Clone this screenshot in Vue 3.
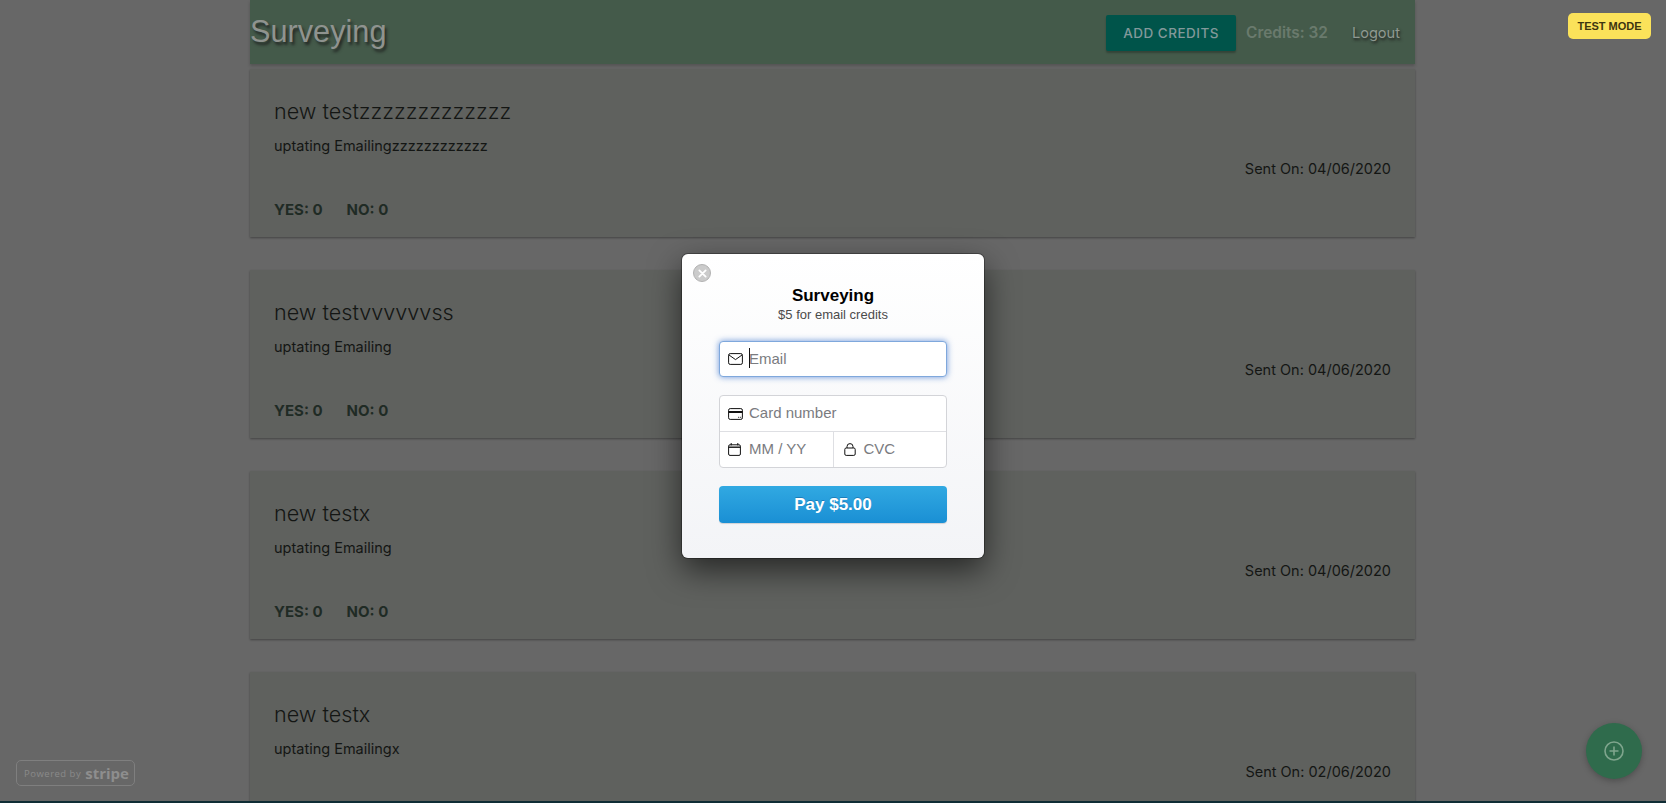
<template>
  <div class="page">
    <div class="container">
      <nav class="nav">
        <a class="brand">Surveying</a>
        <div class="nav-right">
          <button class="add-btn">ADD CREDITS</button>
          <span class="credits">Credits: 32</span>
          <a class="logout">Logout</a>
        </div>
      </nav>
      <div v-for="(s, i) in surveys" :key="i" class="card">
        <div class="card-content">
          <span class="card-title">{{ s.title }}</span>
          <p class="body">{{ s.body }}</p>
          <p class="sent">Sent On: {{ s.sent }}</p>
        </div>
        <div v-if="i < 3" class="card-action">
          <a>YES: 0</a>
          <a>NO: 0</a>
        </div>
      </div>
    </div>

    <a class="fab">
      <svg width="20" height="20" viewBox="0 0 20 20" fill="none" stroke="#7fa58d" stroke-width="1.6">
        <circle cx="10" cy="10" r="9" />
        <path d="M10 5.5v9M5.5 10h9" />
      </svg>
    </a>

    <div class="powered">
      <span class="by">Powered by</span>
      <span class="stripe">stripe</span>
    </div>

    <div class="test-mode">TEST MODE</div>
    <div class="bottom-edge"></div>

    <div class="overlay">
      <div class="modal">
        <button class="close" aria-label="Close">
          <svg width="9" height="9" viewBox="0 0 10 10" stroke="#fff" stroke-width="2" stroke-linecap="round">
            <path d="M1.5 1.5l7 7M8.5 1.5l-7 7" />
          </svg>
        </button>
        <h1 class="m-title">Surveying</h1>
        <div class="m-sub">$5 for email credits</div>

        <div class="field email">
          <svg class="ico" width="15" height="12" viewBox="0 0 15 12" fill="none" stroke="#111" stroke-width="1">
            <rect x="0.6" y="0.6" width="13.8" height="10.8" rx="1.6" />
            <path d="M1 2l6.5 4.6L14 2" />
          </svg>
          <span class="caret"></span>
          <span class="ph">Email</span>
        </div>

        <div class="group">
          <div class="field row">
            <svg class="ico" width="15" height="12" viewBox="0 0 15 12" fill="none" stroke="#111" stroke-width="1">
              <rect x="0.6" y="0.6" width="13.8" height="10.8" rx="1.6" />
              <path d="M0.6 4h13.8" stroke-width="2" />
              <path d="M10.2 9.3h1M12.2 9.3h1" />
            </svg>
            <span class="ph">Card number</span>
          </div>
          <div class="split">
            <div class="field cell">
              <svg class="ico" width="13" height="13" viewBox="0 0 13 13" fill="none" stroke="#111" stroke-width="1">
                <rect x="0.6" y="1.8" width="11.8" height="10.6" rx="1.4" />
                <path d="M0.6 4.2h11.8" stroke-width="1.4" />
                <path d="M3.2 0v2.4M9.8 0v2.4" />
              </svg>
              <span class="ph">MM / YY</span>
            </div>
            <div class="field cell cvc">
              <svg class="ico" width="12" height="13" viewBox="0 0 12 13" fill="none" stroke="#111" stroke-width="1">
                <rect x="0.8" y="5" width="10.4" height="7.4" rx="1.4" />
                <path d="M3 5V3.6a3 3 0 0 1 6 0V5" />
              </svg>
              <span class="ph">CVC</span>
            </div>
          </div>
        </div>

        <button class="pay">Pay $5.00</button>
      </div>
    </div>
  </div>
</template>

<script setup>
const surveys = [
  { title: 'new testzzzzzzzzzzzzz', body: 'uptating Emailingzzzzzzzzzzzz', sent: '04/06/2020' },
  { title: 'new testvvvvvvss', body: 'uptating Emailing', sent: '04/06/2020' },
  { title: 'new testx', body: 'uptating Emailing', sent: '04/06/2020' },
  { title: 'new testx', body: 'uptating Emailingx', sent: '02/06/2020' }
];
</script>

<style>
html, body {
  margin: 0;
  height: 100%;
  overflow: hidden;
  background: #676767;
}
</style>

<style scoped>
.page {
  height: 803px;
  overflow: hidden;
  position: relative;
  font-family: Inter, "Liberation Sans", sans-serif;
  background: #676767;
}
.container {
  width: 1165px;
  margin-left: 250px;
}
.nav {
  height: 64px;
  background: #445a4a;
  display: flex;
  align-items: center;
  justify-content: space-between;
  box-shadow: 0 2px 3px rgba(0, 0, 0, 0.2);
}
.brand {
  font-family: "Liberation Sans", sans-serif;
  font-size: 30.7px;
  color: #8f938f;
  text-shadow: 2px 3px 3px #232724;
}
.nav-right {
  display: flex;
  align-items: center;
  margin-top: 1px;
  padding-right: 15px;
}
.add-btn {
  width: 130px;
  height: 36px;
  border: 0;
  border-radius: 2px;
  background: #00544a;
  color: #82999a;
  font-family: Inter, sans-serif;
  font-size: 13.5px;
  font-weight: 500;
  letter-spacing: 0.5px;
  box-shadow: 0 2px 2px rgba(0, 0, 0, 0.25);
}
.credits {
  margin-left: 10px;
  font-size: 15.4px;
  font-weight: 600;
  color: #6a7a6d;
}
.logout {
  margin-left: 24px;
  font-size: 14.6px;
  color: #8f9991;
  text-shadow: 1px 2px 3px #1d1d1d;
}
.card {
  height: 168px;
  margin: 5px 0 33px;
  background: #5f615e;
  box-shadow: 0 1px 2px rgba(0, 0, 0, 0.35);
  box-sizing: border-box;
  display: flex;
  flex-direction: column;
  color: #141614;
}
.card-content {
  padding: 26px 24px 0;
  flex: 1;
}
.card-title {
  display: block;
  font-size: 21.6px;
  font-weight: 300;
  line-height: 32px;
}
.body {
  margin: 8px 0 0;
  font-size: 14.5px;
  line-height: 22px;
}
.sent {
  margin: 1px 0 0;
  font-size: 14.5px;
  line-height: 22px;
  text-align: right;
}
.card-action {
  padding: 0 24px 18px;
  display: flex;
  gap: 24px;
  font-size: 15px;
  font-weight: 700;
  color: #1f2b25;
}
.fab {
  position: absolute;
  left: 1586px;
  top: 723px;
  width: 56px;
  height: 56px;
  border-radius: 50%;
  background: #2f6b4c;
  display: flex;
  align-items: center;
  justify-content: center;
  box-shadow: 0 2px 6px rgba(0, 0, 0, 0.25);
}
.powered {
  position: absolute;
  left: 16px;
  top: 760px;
  width: 119px;
  height: 26px;
  box-sizing: border-box;
  border: 1px solid #7f7f7f;
  border-radius: 5px;
  display: flex;
  align-items: center;
  padding-left: 7px;
  gap: 4px;
  color: #8a8a8a;
  font-family: "Open Sans", sans-serif;
}
.by {
  font-size: 9.5px;
  letter-spacing: 0.5px;
}
.stripe {
  font-size: 15px;
  font-weight: 700;
  line-height: 16px;
  color: #8e8e8e;
}
.test-mode {
  position: absolute;
  left: 1568px;
  top: 13px;
  width: 83px;
  height: 26px;
  border-radius: 5px;
  background: #fbe25a;
  color: #3d3510;
  font-family: "Liberation Sans", sans-serif;
  font-size: 11px;
  font-weight: 700;
  display: flex;
  align-items: center;
  justify-content: center;
}
.bottom-edge {
  position: absolute;
  left: 0;
  right: 0;
  bottom: 0;
  height: 2px;
  background: #0f2d35;
}
.overlay {
  position: absolute;
  inset: 0;
  display: flex;
  align-items: center;
  justify-content: center;
  padding-top: 9px;
  box-sizing: border-box;
}
.modal {
  position: relative;
  width: 302px;
  height: 304px;
  box-sizing: border-box;
  padding: 32px 37px 0;
  border-radius: 6px;
  background: linear-gradient(#ffffff, #f3f4f7);
  box-shadow: 0 0 0 1px rgba(0, 0, 0, 0.3), 0 12px 32px rgba(0, 0, 0, 0.6);
  display: flex;
  flex-direction: column;
  font-family: "Liberation Sans", sans-serif;
}
.close {
  position: absolute;
  left: 11px;
  top: 10px;
  width: 18px;
  height: 18px;
  padding: 0;
  border: 1px solid #b2b2b2;
  border-radius: 50%;
  background: #cbcbcb;
  display: flex;
  align-items: center;
  justify-content: center;
}
.m-title {
  margin: 0;
  font-size: 17px;
  font-weight: 700;
  line-height: 20px;
  text-align: center;
  color: #000;
}
.m-sub {
  margin-top: 1px;
  font-size: 13px;
  line-height: 16px;
  text-align: center;
  color: #4b4b4b;
}
.field {
  display: flex;
  align-items: center;
  height: 36px;
  box-sizing: border-box;
  position: relative;
}
.email {
  margin-top: 18px;
  background: #fff;
  border: 1px solid #7fa8dc;
  border-radius: 4px;
  box-shadow: 0 0 6px rgba(80, 130, 210, 0.85);
}
.ico {
  position: absolute;
  left: 8px;
}
.ph {
  margin-left: 29px;
  margin-top: -2px;
  font-size: 15px;
  color: #7a7b80;
}
.caret {
  position: absolute;
  left: 29px;
  top: 6px;
  width: 1px;
  height: 20px;
  background: #111;
}
.group {
  margin-top: 18px;
  background: #fff;
  border: 1px solid #d3d4d8;
  border-radius: 4px;
}
.row {
  height: 36px;
  border-bottom: 1px solid #dedfe3;
}
.split {
  display: flex;
}
.cell {
  flex: 1;
  height: 35px;
}
.cvc {
  border-left: 1px solid #dedfe3;
}
.cvc .ico {
  left: 10px;
}
.cvc .ph {
  margin-left: 30px;
}
.pay {
  margin-top: 18px;
  height: 37px;
  padding-top: 2px;
  border: 0;
  border-radius: 4px;
  background: linear-gradient(#31a9e2, #1a8fd4);
  color: #fff;
  font-family: "Liberation Sans", sans-serif;
  font-size: 17px;
  font-weight: 700;
  text-shadow: 0 -1px 0 rgba(0, 60, 120, 0.35);
  box-shadow: 0 1px 1px rgba(0, 0, 0, 0.15);
}
</style>
